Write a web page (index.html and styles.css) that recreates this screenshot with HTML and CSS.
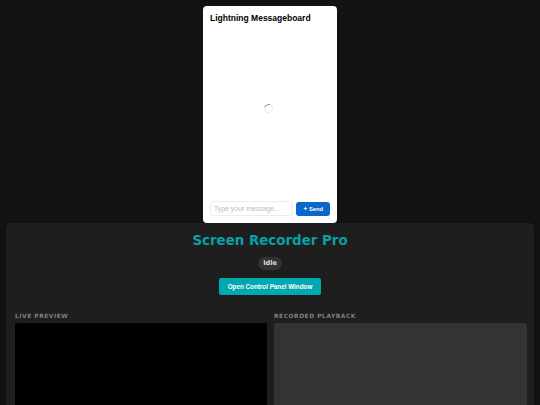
FILE: index.html

```html
<!DOCTYPE html>
<html lang="en">
<head>
  <meta charset="UTF-8">
  <title>Screen Recorder Pro</title>
  <link rel="stylesheet" href="styles.css">
</head>
<body>
  <div class="chat">
    <h2 class="chat-title">Lightning Messageboard</h2>
    <div class="chat-body">
      <span class="spinner"></span>
    </div>
    <div class="chat-form">
      <div class="chat-input">Type your message...</div>
      <div class="send-btn">
        <svg class="send-icon" viewBox="0 0 10 10"><path d="M5 0.5 L6.2 3.8 L9.5 5 L6.2 6.2 L5 9.5 L3.8 6.2 L0.5 5 L3.8 3.8 Z"/></svg>
        Send
      </div>
    </div>
  </div>

  <div class="panel">
    <h1 class="app-title">Screen Recorder Pro</h1>
    <div class="status-row"><span class="status">Idle</span></div>
    <div class="open-row"><div class="open-btn">Open Control Panel Window</div></div>
    <div class="videos">
      <div class="video-col">
        <div class="video-label">LIVE PREVIEW</div>
        <div class="video live"></div>
      </div>
      <div class="video-col">
        <div class="video-label">RECORDED PLAYBACK</div>
        <div class="video recorded"></div>
      </div>
    </div>
  </div>
</body>
</html>
```

FILE: styles.css

```css
html, body {
  height: 100%;
}
body {
  margin: 0;
  padding: 6px 6px 0;
  box-sizing: border-box;
  background: #121212;
  overflow: hidden;
  font-family: "Liberation Sans", sans-serif;
}
.chat {
  width: 134px;
  height: 217px;
  margin: 0 auto;
  box-sizing: border-box;
  padding: 7px;
  background: #fff;
  border-radius: 4px;
  display: flex;
  flex-direction: column;
}
.chat-title {
  margin: 0;
  font-size: 8.5px;
  line-height: 10px;
  font-weight: bold;
  color: #000;
}
.chat-body {
  flex: 1;
  display: flex;
  align-items: center;
  justify-content: center;
}
.spinner {
  width: 9px;
  height: 9px;
  box-sizing: border-box;
  border: 1.2px solid #e4e8ec;
  border-top-color: #3f86cf;
  border-radius: 50%;
  transform: rotate(-25deg);
  margin: 0 4px 8px 0;
}
.chat-form {
  display: flex;
  align-items: center;
  gap: 3px;
}
.chat-input {
  flex: 1;
  height: 13px;
  padding: 0 3px;
  border: 1px solid #ebebeb;
  border-radius: 3px;
  font-size: 6.9px;
  line-height: 13px;
  color: #bdbdbd;
  white-space: nowrap;
  overflow: hidden;
}
.send-btn {
  width: 34px;
  height: 14px;
  background: #0a66c8;
  border-radius: 3px;
  color: #fff;
  font-size: 5.8px;
  font-weight: bold;
  display: flex;
  align-items: center;
  justify-content: center;
  gap: 1px;
}
.send-icon {
  width: 5px;
  height: 5px;
  fill: #fff;
}
.panel {
  background: #1e1e1e;
  border-radius: 5px 5px 0 0;
  padding: 9px 7px 0;
  height: 300px;
}
.app-title {
  margin: 0;
  text-align: center;
  font-family: "DejaVu Sans", sans-serif;
  font-size: 13.4px;
  line-height: 17px;
  font-weight: bold;
  color: #0aa0a8;
}
.status-row {
  margin-top: 8px;
  display: flex;
  justify-content: center;
}
.status {
  background: #333;
  color: #ddd;
  border-radius: 7px;
  padding: 0 5px;
  font-family: "DejaVu Sans", sans-serif;
  font-size: 6.5px;
  font-weight: bold;
  line-height: 13px;
}
.open-row {
  margin-top: 8px;
  display: flex;
  justify-content: center;
}
.open-btn {
  width: 102px;
  height: 17px;
  background: #00a8b0;
  border-radius: 2px;
  color: #fff;
  font-size: 6.3px;
  font-weight: bold;
  line-height: 17px;
  text-align: center;
}
.videos {
  margin-top: 17px;
  padding-left: 2px;
  display: grid;
  grid-template-columns: 252px 253px;
  gap: 7px;
}
.video-label {
  font-family: "DejaVu Sans", sans-serif;
  font-size: 5.9px;
  font-weight: bold;
  letter-spacing: 0.55px;
  line-height: 8px;
  color: #808080;
  margin-bottom: 3px;
}
.video {
  height: 160px;
  border-radius: 2px;
}
.live {
  background: #000;
}
.recorded {
  background: #333;
}
```
